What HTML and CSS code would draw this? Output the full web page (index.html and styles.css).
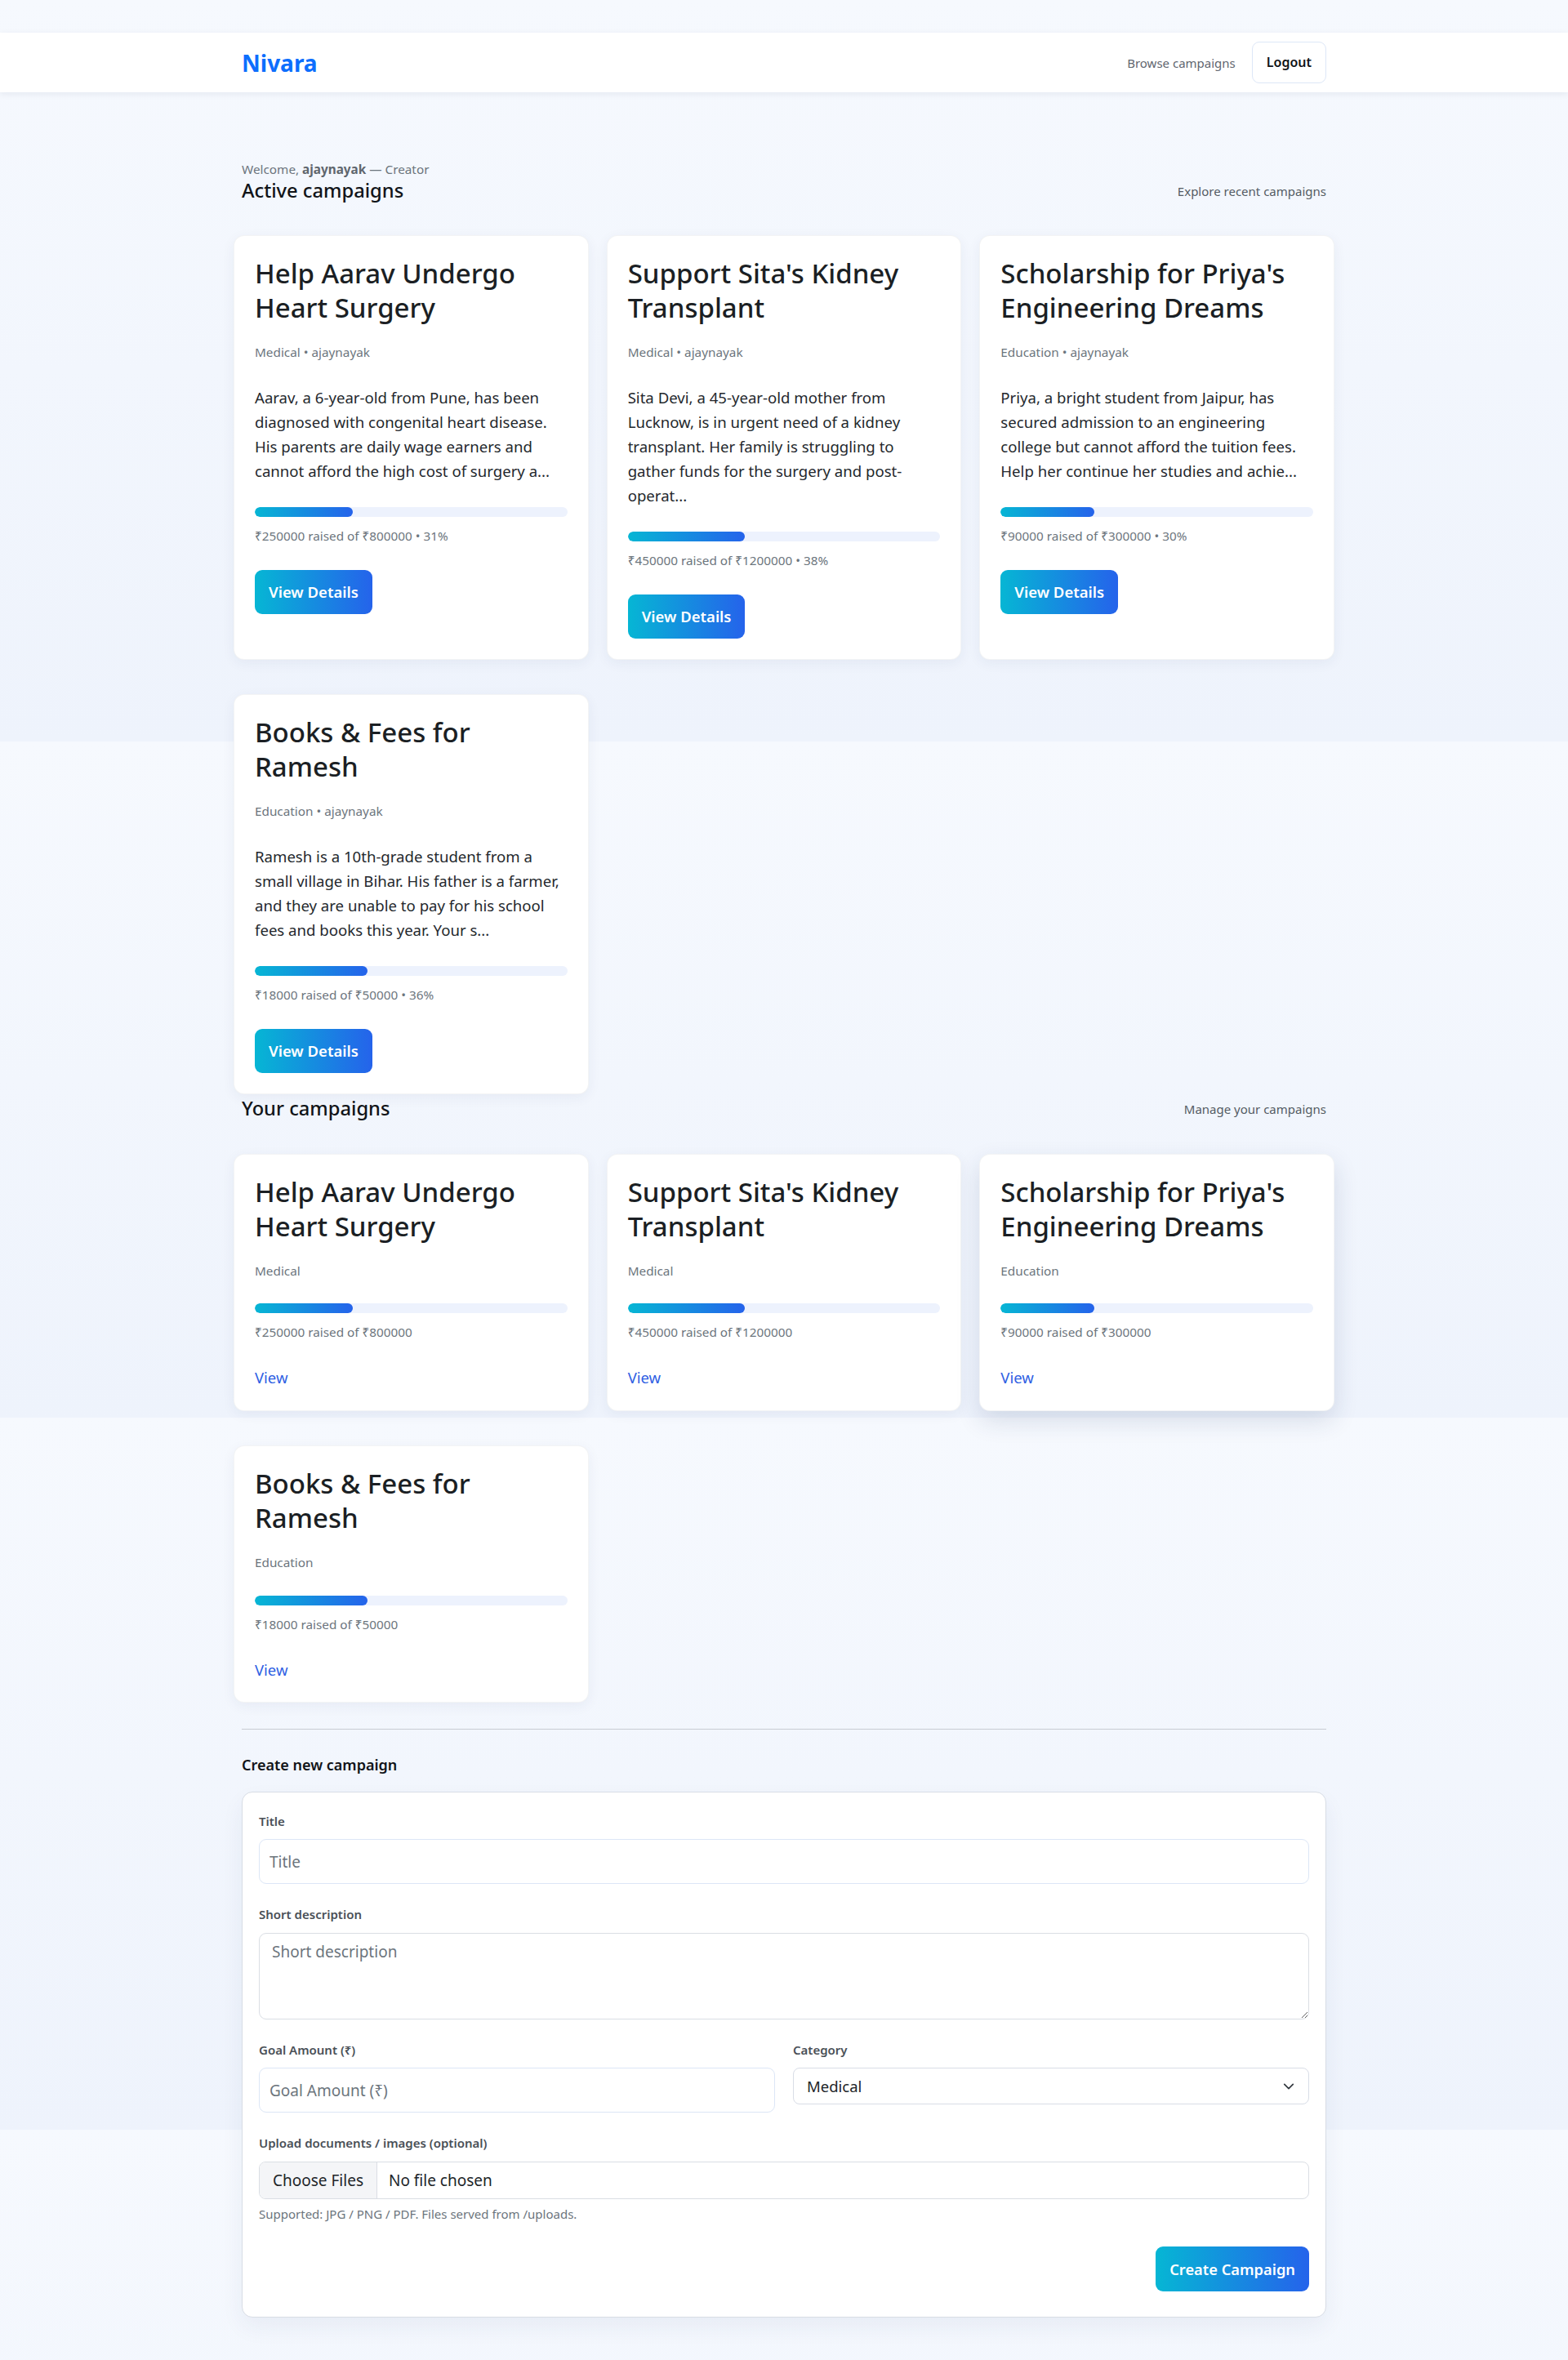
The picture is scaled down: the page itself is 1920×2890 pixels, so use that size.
FILE: index.html
```html
<!DOCTYPE html>
<html lang="en">
<head>
<meta charset="utf-8">
<title>Nivara — Dashboard</title>
<link rel="stylesheet" href="styles.css">
</head>
<body>
<header class="site-header">
  <div class="container nav-inner">
    <a class="brand" href="#">Nivara</a>
    <nav class="nav-links">
      <a class="nav-link" href="#">Browse campaigns</a>
      <button class="btn-logout" type="button">Logout</button>
    </nav>
  </div>
</header>

<main class="container main">
  <section class="section">
    <div class="section-head">
      <div>
        <div class="welcome">Welcome, <strong>ajaynayak</strong> — Creator</div>
        <h2 class="section-title">Active campaigns</h2>
      </div>
      <a class="section-link" href="#">Explore recent campaigns</a>
    </div>
    <div class="card-grid">
      <article class="card">
        <h3 class="card-title">Help Aarav Undergo Heart Surgery</h3>
        <p class="card-meta">Medical • ajaynayak</p>
        <p class="card-desc">Aarav, a 6-year-old from Pune, has been diagnosed with congenital heart disease. His parents are daily wage earners and cannot afford the high cost of surgery a...</p>
        <div class="progress"><div class="progress-fill" style="width:31.25%"></div></div>
        <p class="card-raised">₹250000 raised of ₹800000 • 31%</p>
        <a class="btn-gradient" href="#">View Details</a>
      </article>
      <article class="card">
        <h3 class="card-title">Support Sita's Kidney Transplant</h3>
        <p class="card-meta">Medical • ajaynayak</p>
        <p class="card-desc">Sita Devi, a 45-year-old mother from Lucknow, is in urgent need of a kidney transplant. Her family is struggling to gather funds for the surgery and post-operat...</p>
        <div class="progress"><div class="progress-fill" style="width:37.5%"></div></div>
        <p class="card-raised">₹450000 raised of ₹1200000 • 38%</p>
        <a class="btn-gradient" href="#">View Details</a>
      </article>
      <article class="card">
        <h3 class="card-title">Scholarship for Priya's Engineering Dreams</h3>
        <p class="card-meta">Education • ajaynayak</p>
        <p class="card-desc">Priya, a bright student from Jaipur, has secured admission to an engineering college but cannot afford the tuition fees. Help her continue her studies and achie...</p>
        <div class="progress"><div class="progress-fill" style="width:30%"></div></div>
        <p class="card-raised">₹90000 raised of ₹300000 • 30%</p>
        <a class="btn-gradient" href="#">View Details</a>
      </article>
      <article class="card">
        <h3 class="card-title">Books &amp; Fees for Ramesh</h3>
        <p class="card-meta">Education • ajaynayak</p>
        <p class="card-desc">Ramesh is a 10th-grade student from a small village in Bihar. His father is a farmer, and they are unable to pay for his school fees and books this year. Your s...</p>
        <div class="progress"><div class="progress-fill" style="width:36%"></div></div>
        <p class="card-raised">₹18000 raised of ₹50000 • 36%</p>
        <a class="btn-gradient" href="#">View Details</a>
      </article>
    </div>
  </section>

  <section class="section section-mine">
    <div class="section-head">
      <h2 class="section-title">Your campaigns</h2>
      <a class="section-link" href="#">Manage your campaigns</a>
    </div>
    <div class="card-grid">
      <article class="card">
        <h3 class="card-title">Help Aarav Undergo Heart Surgery</h3>
        <p class="card-meta">Medical</p>
        <div class="progress"><div class="progress-fill" style="width:31.25%"></div></div>
        <p class="card-raised">₹250000 raised of ₹800000</p>
        <a class="link-view" href="#">View</a>
      </article>
      <article class="card">
        <h3 class="card-title">Support Sita's Kidney Transplant</h3>
        <p class="card-meta">Medical</p>
        <div class="progress"><div class="progress-fill" style="width:37.5%"></div></div>
        <p class="card-raised">₹450000 raised of ₹1200000</p>
        <a class="link-view" href="#">View</a>
      </article>
      <article class="card card-hover">
        <h3 class="card-title">Scholarship for Priya's Engineering Dreams</h3>
        <p class="card-meta">Education</p>
        <div class="progress"><div class="progress-fill" style="width:30%"></div></div>
        <p class="card-raised">₹90000 raised of ₹300000</p>
        <a class="link-view" href="#">View</a>
      </article>
      <article class="card">
        <h3 class="card-title">Books &amp; Fees for Ramesh</h3>
        <p class="card-meta">Education</p>
        <div class="progress"><div class="progress-fill" style="width:36%"></div></div>
        <p class="card-raised">₹18000 raised of ₹50000</p>
        <a class="link-view" href="#">View</a>
      </article>
    </div>
  </section>

  <hr class="divider">

  <section class="create">
    <h4 class="create-title">Create new campaign</h4>
    <form class="form-card">
      <div class="field">
        <label class="label" for="title">Title</label>
        <input class="input" id="title" type="text" placeholder="Title">
      </div>
      <div class="field">
        <label class="label" for="desc">Short description</label>
        <textarea class="input textarea" id="desc" placeholder="Short description"></textarea>
      </div>
      <div class="field field-row">
        <div>
          <label class="label" for="goal">Goal Amount (₹)</label>
          <input class="input" id="goal" type="number" placeholder="Goal Amount (₹)">
        </div>
        <div>
          <label class="label" for="cat">Category</label>
          <div class="select-wrap">
            <select class="select" id="cat">
              <option>Medical</option>
              <option>Education</option>
            </select>
            <svg class="chevron" width="14" height="14" viewBox="0 0 16 16" aria-hidden="true"><path d="M2 5l6 6 6-6" fill="none" stroke="#343a40" stroke-width="2" stroke-linecap="round" stroke-linejoin="round"/></svg>
          </div>
        </div>
      </div>
      <div class="field field-upload">
        <label class="label" for="files">Upload documents / images (optional)</label>
        <input class="file" id="files" type="file" multiple>
        <div class="help">Supported: JPG / PNG / PDF. Files served from /uploads.</div>
      </div>
      <div class="actions">
        <button class="btn-gradient btn-submit" type="submit">Create Campaign</button>
      </div>
    </form>
  </section>
</main>
</body>
</html>
```

FILE: styles.css
```css
* { box-sizing: border-box; }

html, body { margin: 0; }

body {
  font-family: "Noto Sans", "Open Sans", "DejaVu Sans", sans-serif;
  color: #212529;
  background-color: #f6f9fe;
  background-image:
    linear-gradient(180deg, #f6f9fe 0%, #eef3fc 100%),
    linear-gradient(180deg, #f6f9fe 0%, #eef3fc 100%),
    linear-gradient(180deg, #f6f9fe 0%, #eef3fc 100%),
    linear-gradient(180deg, #f6f9fe 0%, #eef3fc 100%);
  background-size: 100% 908px, 100% 828px, 100% 872px, 100% 872px;
  background-position: 0 0, 0 908px, 0 1736px, 0 2608px;
  background-repeat: no-repeat;
  padding-top: 40px;
  min-height: 2890px;
}

.container {
  width: 1328px;
  margin: 0 auto;
}

/* Header */
.site-header {
  background: #fff;
  box-shadow: 0 2px 8px rgba(20, 30, 60, 0.07);
}

.nav-inner {
  height: 73px;
  display: flex;
  align-items: center;
  justify-content: space-between;
}

.brand {
  font-size: 28px;
  font-weight: 700;
  color: #0d6efd;
  text-decoration: none;
}

.nav-links {
  display: flex;
  align-items: center;
  gap: 20px;
}

.nav-link {
  font-size: 15px;
  color: #5f6670;
  text-decoration: none;
}

.btn-logout {
  font-family: inherit;
  font-size: 16px;
  font-weight: 600;
  line-height: 25px;
  padding: 12px 17px;
  border: 1px solid #dde7f7;
  border-radius: 9px;
  background: #fff;
  color: #111418;
}

/* Main */
.main {
  padding: 83px 0 54px;
}

.section-head {
  display: flex;
  justify-content: space-between;
  align-items: flex-end;
  margin-bottom: 40px;
}

.welcome {
  font-size: 15.3px;
  line-height: 1.5;
  color: #6c757d;
}

.welcome strong {
  font-weight: 700;
  color: #5f666d;
}

.section-title {
  margin: 0;
  font-size: 23.7px;
  line-height: 29.4px;
  font-weight: 500;
  color: #111418;
}

.section-link {
  font-size: 15px;
  line-height: 1.5;
  color: #555c64;
  text-decoration: none;
  margin-bottom: 3px;
}

.section-mine {
  margin-top: 3px;
}

.card-grid {
  display: grid;
  grid-template-columns: repeat(3, 1fr);
  column-gap: 22px;
  row-gap: 42px;
  margin: 0 -10px;
}

.card {
  background: #fff;
  border: 1px solid rgba(20, 30, 60, 0.05);
  border-radius: 13px;
  padding: 25px;
  box-shadow: 0 4px 16px rgba(30, 50, 100, 0.06);
}

.card-hover {
  box-shadow: 0 12px 30px rgba(30, 50, 100, 0.14);
}

.card-title {
  margin: 0 0 22px;
  font-size: 33px;
  line-height: 42px;
  font-weight: 500;
  color: #1b1f24;
}

.card-meta {
  margin: 0 0 29px;
  font-size: 15.3px;
  line-height: 1.5;
  color: #6c757d;
}

.card-desc {
  margin: 0 0 29px;
  font-size: 18.6px;
  line-height: 30px;
  color: #24282d;
}

.progress {
  height: 12px;
  border-radius: 6px;
  background: #edf2fd;
  overflow: hidden;
  margin-bottom: 12px;
}

.progress-fill {
  height: 100%;
  border-radius: 6px;
  background: linear-gradient(90deg, #06b6d4, #2563eb);
}

.card-raised {
  margin: 0 0 30px;
  font-size: 15.3px;
  line-height: 1.5;
  color: #6c757d;
}

.btn-gradient {
  display: inline-block;
  font-family: inherit;
  font-size: 18.5px;
  font-weight: 600;
  line-height: 28px;
  padding: 13px 17px;
  border: 0;
  border-radius: 9px;
  color: #fff;
  text-decoration: none;
  background: linear-gradient(90deg, #06b6d4, #2563eb);
}

.link-view {
  display: inline-block;
  font-size: 18.5px;
  line-height: 28.5px;
  color: #2f5fe3;
  text-decoration: none;
}

/* Divider */
.divider {
  margin: 32px 0 0;
  border: 0;
  border-top: 1px solid #c8ccd3;
}

/* Create form */
.create-title {
  margin: 33px 0 21px;
  font-size: 18px;
  line-height: 1.2;
  font-weight: 600;
  color: #111418;
}

.form-card {
  background: #fff;
  border: 1px solid #d8dde5;
  border-radius: 13px;
  padding: 24px 20px 30.5px;
  box-shadow: 0 12px 28px rgba(30, 50, 100, 0.06);
}

.field {
  margin-bottom: 26px;
}

.label {
  display: block;
  margin-bottom: 11px;
  font-size: 15px;
  line-height: 1.5;
  font-weight: 600;
  color: #4a5057;
}

.input {
  display: block;
  width: 100%;
  height: 55px;
  padding: 0 12px;
  font-family: inherit;
  font-size: 19px;
  color: #212529;
  background: #fff;
  border: 1px solid #dce6f6;
  border-radius: 9px;
  outline: none;
}

.input::placeholder {
  color: #6c757d;
}

.textarea {
  height: 106px;
  padding: 8px 15px;
  line-height: 1.5;
  border-color: #dadee4;
  resize: vertical;
}

.field-row {
  display: grid;
  grid-template-columns: 1fr 1fr;
  column-gap: 22px;
}

.select-wrap {
  position: relative;
}

.select {
  display: block;
  width: 100%;
  height: 45px;
  padding: 0 40px 0 16px;
  font-family: inherit;
  font-size: 18.5px;
  color: #212529;
  background: #fff;
  border: 1px solid #d8dde6;
  border-radius: 8px;
  appearance: none;
  -webkit-appearance: none;
}

.chevron {
  position: absolute;
  right: 18px;
  top: 16px;
  pointer-events: none;
}

.field-upload {
  margin-bottom: 0;
}

.file {
  display: block;
  width: 100%;
  height: 46px;
  font-family: inherit;
  font-size: 19px;
  color: #212529;
  background: #fff;
  border: 1px solid #dadee4;
  border-radius: 8px;
  overflow: hidden;
  padding: 0;
}

.file::file-selector-button {
  height: 44px;
  margin: 0 14px 0 0;
  padding: 0 16px;
  font-family: inherit;
  font-size: 19px;
  color: #212529;
  background: #f4f5f7;
  border: 0;
  border-right: 1px solid #dadee4;
}

.help {
  margin-top: 7px;
  font-size: 15px;
  line-height: 1.5;
  color: #6c757d;
}

.actions {
  display: flex;
  justify-content: flex-end;
  margin-top: 29px;
}

.btn-submit {
  padding: 13px 17px;
  font-size: 18.3px;
  line-height: 29px;
}
```
